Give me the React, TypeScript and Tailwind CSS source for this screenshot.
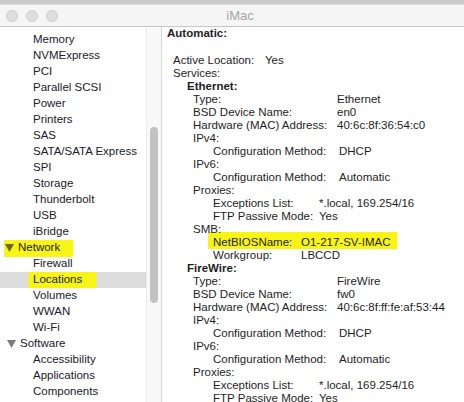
import React from 'react';

type SideItem = { t: string; section?: boolean; selected?: boolean; hl?: boolean };

const sideItems: SideItem[] = [
  { t: 'Hardware RAID' },
  { t: 'Memory' },
  { t: 'NVMExpress' },
  { t: 'PCI' },
  { t: 'Parallel SCSI' },
  { t: 'Power' },
  { t: 'Printers' },
  { t: 'SAS' },
  { t: 'SATA/SATA Express' },
  { t: 'SPI' },
  { t: 'Storage' },
  { t: 'Thunderbolt' },
  { t: 'USB' },
  { t: 'iBridge' },
  { t: 'Network', section: true, hl: true },
  { t: 'Firewall' },
  { t: 'Locations', selected: true, hl: true },
  { t: 'Volumes' },
  { t: 'WWAN' },
  { t: 'Wi-Fi' },
  { t: 'Software', section: true },
  { t: 'Accessibility' },
  { t: 'Applications' },
  { t: 'Components' },
];

type Line = { x: number; label: string; value?: string; w?: number; bold?: boolean; hl?: boolean };

const ethernet: Line[] = [
  { x: 25, label: 'Ethernet:', bold: true },
  { x: 31, label: 'Type:', value: 'Ethernet', w: 144 },
  { x: 31, label: 'BSD Device Name:', value: 'en0', w: 144 },
  { x: 31, label: 'Hardware (MAC) Address:', value: '40:6c:8f:36:54:c0', w: 144 },
  { x: 31, label: 'IPv4:' },
  { x: 51, label: 'Configuration Method:', value: 'DHCP', w: 126 },
  { x: 31, label: 'IPv6:' },
  { x: 51, label: 'Configuration Method:', value: 'Automatic', w: 126 },
  { x: 31, label: 'Proxies:' },
  { x: 51, label: 'Exceptions List:', value: '*.local, 169.254/16', w: 106 },
  { x: 51, label: 'FTP Passive Mode:', value: 'Yes', w: 106 },
  { x: 31, label: 'SMB:' },
  { x: 51, label: 'NetBIOSName:', value: 'O1-217-SV-IMAC', w: 88, hl: true },
  { x: 51, label: 'Workgroup:', value: 'LBCCD', w: 88 },
];

const firewire: Line[] = [
  { x: 25, label: 'FireWire:', bold: true },
  { x: 31, label: 'Type:', value: 'FireWire', w: 144 },
  { x: 31, label: 'BSD Device Name:', value: 'fw0', w: 144 },
  { x: 31, label: 'Hardware (MAC) Address:', value: '40:6c:8f:ff:fe:af:53:44', w: 144 },
  { x: 31, label: 'IPv4:' },
  { x: 51, label: 'Configuration Method:', value: 'DHCP', w: 126 },
  { x: 31, label: 'IPv6:' },
  { x: 51, label: 'Configuration Method:', value: 'Automatic', w: 126 },
  { x: 31, label: 'Proxies:' },
  { x: 51, label: 'Exceptions List:', value: '*.local, 169.254/16', w: 106 },
  { x: 51, label: 'FTP Passive Mode:', value: 'Yes', w: 106 },
];

function Triangle({ color }: { color: string }) {
  return (
    <svg width="9" height="8" viewBox="0 0 9 8" className="shrink-0">
      <polygon points="0,0 9,0 4.5,8" fill={color} />
    </svg>
  );
}

function SideRow({ item }: { item: SideItem }) {
  if (item.section) {
    return (
      <div className="h-[16px] flex items-center pl-[5px] whitespace-nowrap">
        <span
          className={`flex items-center gap-[4px] h-[17px] ${item.hl ? 'bg-[#f8f516] pl-[1px] -ml-[1px] pr-[13px]' : 'pl-[2px]'}`}
        >
          <Triangle color={item.hl ? '#6d6b12' : '#7c7c7c'} />
          <span>{item.t}</span>
        </span>
      </div>
    );
  }
  return (
    <div className={`h-[16px] flex items-center pl-[28px] whitespace-nowrap ${item.selected ? 'bg-[#dcdcdc]' : ''}`}>
      <span className={`h-[16px] flex items-center pl-[5px] ${item.hl ? 'bg-[#f8f516] pr-[14px]' : ''}`}>{item.t}</span>
    </div>
  );
}

function InfoLine({ line }: { line: Line }) {
  const body = (
    <>
      <span className={`inline-block shrink-0 ${line.bold ? 'font-bold' : ''}`} style={line.w ? { width: line.w } : undefined}>
        {line.label}
      </span>
      {line.value && <span className="whitespace-nowrap">{line.value}</span>}
    </>
  );
  if (line.hl) {
    return (
      <div style={{ marginLeft: line.x - 5 }} className="-mt-[4px] pt-[4px] pl-[5px] pr-[7px] w-fit flex h-[17px] bg-[#f8f516]">
        {body}
      </div>
    );
  }
  return (
    <div style={{ paddingLeft: line.x }} className="flex h-[13px] whitespace-nowrap">
      {body}
    </div>
  );
}

export default function App() {
  return (
    <div className="w-[464px] h-[402px] overflow-hidden flex flex-col bg-white font-['Liberation_Sans',Arial,sans-serif] text-[11.5px] text-[#1e1e1e]">
      {/* title bar */}
      <div className="h-[4px] bg-[#c9c9c9] shrink-0" />
      <div className="h-[23px] shrink-0 flex items-center bg-[#f5f5f5] border-t border-[#dcdcdc] border-b border-b-[#c6c6c6]">
        <div className="w-[64px] flex items-center gap-[8px] pl-[6px]">
          <span className="w-[12px] h-[12px] rounded-full bg-[#dedede] border border-[#d0d0d0]" />
          <span className="w-[12px] h-[12px] rounded-full bg-[#dedede] border border-[#d0d0d0]" />
          <span className="w-[12px] h-[12px] rounded-full bg-[#dedede] border border-[#d0d0d0]" />
        </div>
        <div className="flex-1 pr-[48px] text-center text-[13px] text-[#a6a6a6]">iMac</div>
      </div>

      <div className="flex flex-1 min-h-0">
        {/* sidebar */}
        <div className="w-[146px] shrink-0 overflow-hidden text-[#20202a]">
          <div className="-mt-[11px]">
            {sideItems.map((it, i) => (
              <SideRow key={i} item={it} />
            ))}
          </div>
        </div>

        {/* scrollbar */}
        <div className="w-[16px] shrink-0 bg-[#f9f9f9] border-l border-[#ebebeb] border-r border-r-[#d8d8d8] pl-[3px]">
          <div className="mt-[100px] w-[8px] h-[176px] rounded-full bg-[#c2c2c2]" />
        </div>

        {/* content */}
        <div className="flex-1 min-w-0 overflow-hidden leading-[13px]">
          <div className="pl-[5px] h-[13px] font-bold">Automatic:</div>
          <div className="mt-[14px]">
            <InfoLine line={{ x: 11, label: 'Active Location:', value: 'Yes', w: 92 }} />
            <InfoLine line={{ x: 11, label: 'Services:' }} />
            {ethernet.map((l, i) => (
              <InfoLine key={'e' + i} line={l} />
            ))}
            {firewire.map((l, i) => (
              <InfoLine key={'f' + i} line={l} />
            ))}
          </div>
        </div>
      </div>
    </div>
  );
}
